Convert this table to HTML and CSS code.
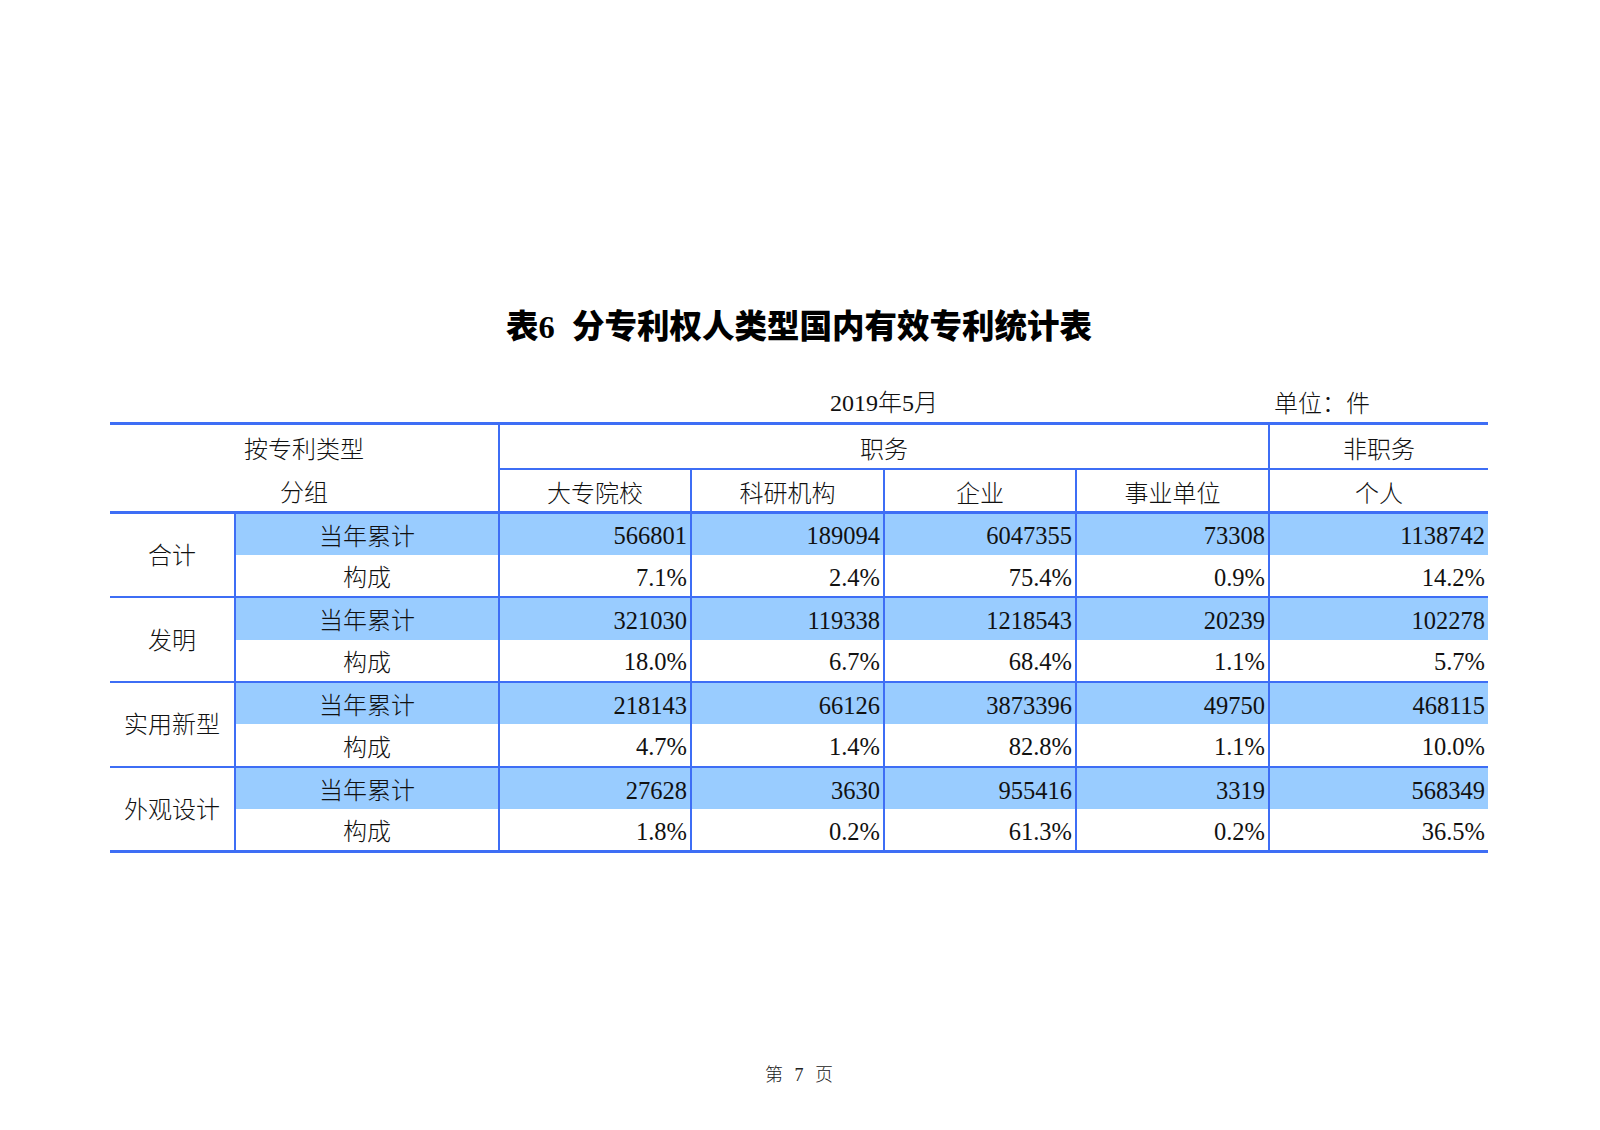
FILE: index.html
```html
<!DOCTYPE html>
<html lang="zh-CN">
<head>
<meta charset="utf-8">
<title>表6 分专利权人类型国内有效专利统计表</title>
<link rel="stylesheet" href="styles.css">
</head>
<body>
<div class="page">
  <h1 class="title">表6<span class="gap"></span>分专利权人类型国内有效专利统计表</h1>
  <div class="meta">
    <div class="meta-spacer"></div>
    <div class="meta-date">2019年5月</div>
    <div class="meta-unit">单位：件</div>
  </div>
  <table class="stats">
    <colgroup>
      <col class="c1"><col class="c2"><col class="c3"><col class="c4"><col class="c5"><col class="c6"><col class="c7">
    </colgroup>
    <thead>
      <tr class="h1">
        <th colspan="2" class="group-head">按专利类型</th>
        <th colspan="4" class="vl hb">职务</th>
        <th class="vl hb">非职务</th>
      </tr>
      <tr class="h2">
        <th colspan="2" class="group-head">分组</th>
        <th class="vl">大专院校</th>
        <th class="vl">科研机构</th>
        <th class="vl">企业</th>
        <th class="vl">事业单位</th>
        <th class="vl">个人</th>
      </tr>
    </thead>
    <tbody>
      <tr class="sum first">
        <td rowspan="2" class="grp">合计</td>
        <td class="sub">当年累计</td>
        <td class="num">566801</td><td class="num">189094</td><td class="num">6047355</td><td class="num">73308</td><td class="num">1138742</td>
      </tr>
      <tr class="pct">
        <td class="sub">构成</td>
        <td class="num">7.1%</td><td class="num">2.4%</td><td class="num">75.4%</td><td class="num">0.9%</td><td class="num">14.2%</td>
      </tr>
      <tr class="sum">
        <td rowspan="2" class="grp">发明</td>
        <td class="sub">当年累计</td>
        <td class="num">321030</td><td class="num">119338</td><td class="num">1218543</td><td class="num">20239</td><td class="num">102278</td>
      </tr>
      <tr class="pct">
        <td class="sub">构成</td>
        <td class="num">18.0%</td><td class="num">6.7%</td><td class="num">68.4%</td><td class="num">1.1%</td><td class="num">5.7%</td>
      </tr>
      <tr class="sum">
        <td rowspan="2" class="grp">实用新型</td>
        <td class="sub">当年累计</td>
        <td class="num">218143</td><td class="num">66126</td><td class="num">3873396</td><td class="num">49750</td><td class="num">468115</td>
      </tr>
      <tr class="pct">
        <td class="sub">构成</td>
        <td class="num">4.7%</td><td class="num">1.4%</td><td class="num">82.8%</td><td class="num">1.1%</td><td class="num">10.0%</td>
      </tr>
      <tr class="sum">
        <td rowspan="2" class="grp">外观设计</td>
        <td class="sub">当年累计</td>
        <td class="num">27628</td><td class="num">3630</td><td class="num">955416</td><td class="num">3319</td><td class="num">568349</td>
      </tr>
      <tr class="pct">
        <td class="sub">构成</td>
        <td class="num">1.8%</td><td class="num">0.2%</td><td class="num">61.3%</td><td class="num">0.2%</td><td class="num">36.5%</td>
      </tr>
    </tbody>
  </table>
  <div class="footer">第 7 页</div>
</div>
</body>
</html>
```

FILE: styles.css
```css
html, body {
  margin: 0;
  padding: 0;
  background: #ffffff;
}

body {
  width: 1600px;
  height: 1130px;
  overflow: hidden;
  font-family: "Liberation Serif", "Noto Sans CJK SC", serif;
  font-weight: 300;
  color: #111111;
}

.page {
  padding: 306px 112px 0 110px;
}

.title {
  margin: 0;
  text-align: center;
  font-size: 32.5px;
  line-height: 42px;
  font-weight: 900;
  color: #000000;
  font-family: "Liberation Serif", "Noto Sans CJK SC", serif;
}

.gap {
  display: inline-block;
  width: 17px;
}

.meta {
  display: flex;
  margin-top: 39px;
  height: 30px;
  font-size: 24px;
  line-height: 30px;
}

.meta-spacer {
  width: 389px;
}

.meta-date {
  width: 770px;
  text-align: center;
  padding-top: 1px;
}

.meta-unit {
  padding-left: 5px;
  padding-top: 2px;
}

.stats {
  margin-top: 5px;
  width: 1378px;
  table-layout: fixed;
  border-collapse: collapse;
  border-top: 3px solid #3e6ef5;
  border-bottom: 3px solid #3e6ef5;
  font-size: 24px;
}

.c1 { width: 125px; }
.c2 { width: 264px; }
.c3 { width: 192px; }
.c4 { width: 193px; }
.c5 { width: 192px; }
.c6 { width: 193px; }
.c7 { width: 219px; }

.stats th,
.stats td {
  padding: 0;
  font-weight: 300;
  text-align: center;
  vertical-align: middle;
  line-height: 28px;
  white-space: nowrap;
}

.h1 { height: 45px; }
.h1 th { padding-top: 7px; }
.h2 { height: 44px; }
.h2 th {
  border-bottom: 3px solid #3e6ef5;
  padding-top: 7px;
}

.vl {
  border-left: 2px solid #3e6ef5;
}

.hb {
  border-bottom: 2px solid #3e6ef5;
}

.stats tbody tr {
  height: 42.4px;
}

.stats tbody tr.sum td {
  border-top: 2px solid #3e6ef5;
}

.stats tbody tr.first td {
  border-top: 3px solid #3e6ef5;
}

.stats tbody tr.sum td.sub,
.stats tbody tr.sum td.num {
  background: #99ccff;
}

.grp {
  border-right: 2px solid #3e6ef5;
  padding-top: 2px !important;
}

.sub {
  border-right: 2px solid #3e6ef5;
  padding-top: 5px !important;
}

.num {
  text-align: right !important;
  padding-right: 3px !important;
  padding-top: 4px !important;
  border-right: 2px solid #3e6ef5;
  font-size: 24.5px;
}

.stats td.num:last-child {
  border-right: none;
}

.footer {
  margin-top: 210px;
  text-align: center;
  font-size: 18px;
  line-height: 24px;
  word-spacing: 7px;
  color: #222222;
}
```
